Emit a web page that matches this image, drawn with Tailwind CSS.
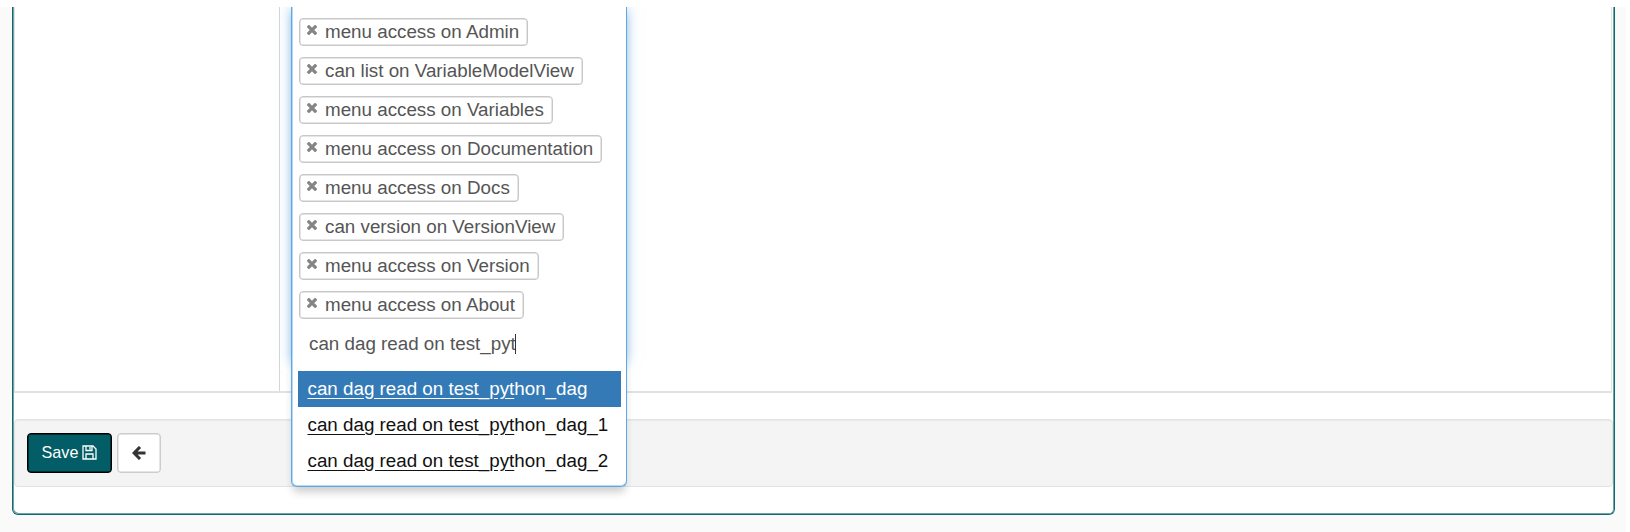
<!DOCTYPE html>
<html lang="en">
<head>
<meta charset="utf-8">
<title>Edit Role</title>
<script src="https://cdn.jsdelivr.net/npm/@tailwindcss/browser@4"></script>
</head>
<body class="h-[532px] overflow-hidden bg-white pt-[7px] font-['Liberation_Sans',Arial,sans-serif]">
<svg class="hidden">
  <symbol id="x" viewBox="0 0 10 10"><path d="M1.9 1.9 8.1 8.1M8.1 1.9 1.9 8.1" stroke="#858585" stroke-width="3.3" stroke-linecap="square" fill="none"/></symbol>
</svg>
<div class="h-[525px] w-[1626px] overflow-hidden bg-[#fafafa] pl-3">
  <main class="relative h-[508px] w-[1603px] rounded-b-md border border-t-0 border-[#12696f] bg-white shadow-[inset_1px_-1px_0_#6fa5a8,inset_-1px_0_0_#6fa5a8]">
    <section class="ml-px flex h-[386px] w-[1598px] border-x border-b-2 border-[#e2e2e2]">
      <div class="w-[265px] border-r border-[#d5d5d5]"></div>
      <div class="grow"></div>
    </section>
    <footer class="mt-[26px] ml-px flex h-[68px] w-[1599px] items-center gap-[5px] rounded-[4px] border border-[#e3e3e3] bg-[#f4f4f4] pl-3 shadow-[inset_0_1px_1px_rgba(0,0,0,0.05)]">
      <button class="-mt-px flex h-10 w-[85px] items-center justify-center gap-1 rounded-[4px] border border-black bg-[#025d66] text-[16.2px] text-white shadow-[inset_0_0_0_0.5px_#000]">Save
        <svg class="h-[15px] w-[15px]" viewBox="0 0 15 15" fill="none" stroke="#fff" stroke-width="1.3"><path d="M1 1h10l3 3v10H1zM4 14V9h7v5M4 1v4.5h6V1M8 2v2.5"/></svg>
      </button>
      <button class="-mt-px flex h-10 w-11 items-center justify-center rounded-[4px] border border-[#ccc] bg-white shadow-[inset_0_0_0_0.5px_#ccc]" aria-label="Back">
        <svg class="h-[14px] w-[14px]" viewBox="0 0 14 14" fill="none" stroke="#333" stroke-width="3"><path d="M13.5 7H2M8 1 2 7l6 6"/></svg>
      </button>
    </footer>
    <div class="absolute top-0 left-[278px] h-[355px] w-[336px] shadow-[0_0_12px_rgba(102,175,233,0.6)]"></div>
    <div class="absolute top-0 left-[278px] h-[480px] w-[336px] rounded-b-[6px] border border-t-0 border-[#5da9e5] bg-white px-[7px] pt-[11px] text-[18.8px] leading-[24px] text-[#555] shadow-[0_7px_8px_-2px_rgba(0,0,0,0.2),inset_1px_0_0_#b5daf7,inset_0_-1px_0_#b5daf7]">
      <ul class="flex flex-col items-start gap-[11px]">
        <li class="flex h-7 items-center rounded-[4px] border border-[#c8c8c8] pr-[8px] pb-px pl-[7px] whitespace-nowrap shadow-[inset_0_0_0_0.5px_#ccc]"><svg class="mt-[-3px] mr-[8px] h-[10px] w-[10px]"><use href="#x"/></svg>menu access on Admin</li>
        <li class="flex h-7 items-center rounded-[4px] border border-[#c8c8c8] pr-[8px] pb-px pl-[7px] whitespace-nowrap shadow-[inset_0_0_0_0.5px_#ccc]"><svg class="mt-[-3px] mr-[8px] h-[10px] w-[10px]"><use href="#x"/></svg>can list on VariableModelView</li>
        <li class="flex h-7 items-center rounded-[4px] border border-[#c8c8c8] pr-[8px] pb-px pl-[7px] whitespace-nowrap shadow-[inset_0_0_0_0.5px_#ccc]"><svg class="mt-[-3px] mr-[8px] h-[10px] w-[10px]"><use href="#x"/></svg>menu access on Variables</li>
        <li class="flex h-7 items-center rounded-[4px] border border-[#c8c8c8] pr-[8px] pb-px pl-[7px] whitespace-nowrap shadow-[inset_0_0_0_0.5px_#ccc]"><svg class="mt-[-3px] mr-[8px] h-[10px] w-[10px]"><use href="#x"/></svg>menu access on Documentation</li>
        <li class="flex h-7 items-center rounded-[4px] border border-[#c8c8c8] pr-[8px] pb-px pl-[7px] whitespace-nowrap shadow-[inset_0_0_0_0.5px_#ccc]"><svg class="mt-[-3px] mr-[8px] h-[10px] w-[10px]"><use href="#x"/></svg>menu access on Docs</li>
        <li class="flex h-7 items-center rounded-[4px] border border-[#c8c8c8] pr-[8px] pb-px pl-[7px] whitespace-nowrap shadow-[inset_0_0_0_0.5px_#ccc]"><svg class="mt-[-3px] mr-[8px] h-[10px] w-[10px]"><use href="#x"/></svg>can version on VersionView</li>
        <li class="flex h-7 items-center rounded-[4px] border border-[#c8c8c8] pr-[8px] pb-px pl-[7px] whitespace-nowrap shadow-[inset_0_0_0_0.5px_#ccc]"><svg class="mt-[-3px] mr-[8px] h-[10px] w-[10px]"><use href="#x"/></svg>menu access on Version</li>
        <li class="flex h-7 items-center rounded-[4px] border border-[#c8c8c8] pr-[8px] pb-px pl-[7px] whitespace-nowrap shadow-[inset_0_0_0_0.5px_#ccc]"><svg class="mt-[-3px] mr-[8px] h-[10px] w-[10px]"><use href="#x"/></svg>menu access on About</li>
      </ul>
      <div class="mt-[13px] flex h-6 items-center pl-[10px] whitespace-nowrap">can dag read on test_pyt<span class="-ml-px h-5 w-px bg-[#333]"></span></div>
      <ul class="-mx-px mt-[15px] text-[#111]">
        <li class="flex h-9 w-[323px] items-center bg-[#337ab7] pb-px pl-[9.5px] whitespace-nowrap text-white"><span class="underline underline-offset-[3px]">can dag read on test_pyt</span>hon_dag</li>
        <li class="flex h-9 items-center pl-[9.5px] whitespace-nowrap"><span class="underline underline-offset-[3px]">can dag read on test_pyt</span>hon_dag_1</li>
        <li class="flex h-9 items-center pl-[9.5px] whitespace-nowrap"><span class="underline underline-offset-[3px]">can dag read on test_pyt</span>hon_dag_2</li>
      </ul>
    </div>
  </main>
</div>
</body>
</html>
